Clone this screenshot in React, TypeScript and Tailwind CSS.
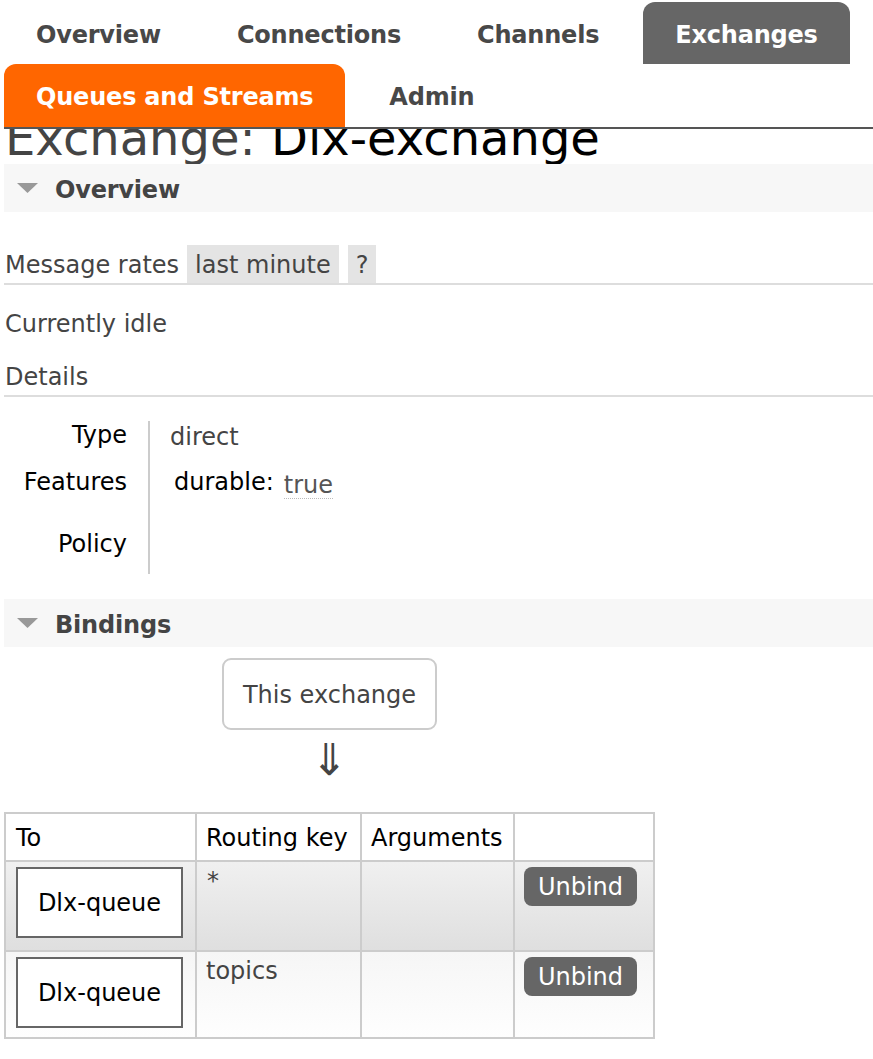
import React from "react";

const tabsTop = [
  { label: "Overview", active: false },
  { label: "Connections", active: false },
  { label: "Channels", active: false },
  { label: "Exchanges", active: true },
];

function Tab({ label, tone }: { label: string; tone: "none" | "gray" | "orange" }) {
  const cls =
    tone === "gray"
      ? "bg-[#666] text-white rounded-t-[12px]"
      : tone === "orange"
        ? "bg-[#f60] text-white rounded-t-[12px]"
        : "text-[#484848]";
  return (
    <div
      className={`flex items-center px-[32px] pt-[3px] font-bold tracking-[-0.2px] whitespace-nowrap ${cls}`}
    >
      {label}
    </div>
  );
}

function SectionHeader({ title }: { title: string }) {
  return (
    <div className="ml-[4px] flex h-[48px] items-center bg-[#f7f7f7]">
      <svg width="21" height="10" viewBox="0 0 21 10" className="ml-[13px] mr-[17px]">
        <polygon points="0,0 21,0 10.5,10" fill="#999" />
      </svg>
      <span className="pt-[3px] font-bold tracking-[-0.2px] text-[#444]">{title}</span>
    </div>
  );
}

function Unbind() {
  return (
    <div className="ml-[9px] mt-[5px] flex h-[39px] w-[113px] items-center justify-center rounded-[8px] bg-[#666] text-white">
      Unbind
    </div>
  );
}

function QueueBox() {
  return (
    <div className="ml-[10px] mt-[5px] flex h-[71px] w-[167px] items-center justify-center border-2 border-[#666] bg-white text-black">
      Dlx-queue
    </div>
  );
}

export default function App() {
  return (
    <div
      className="w-[873px] bg-white pb-[20px] text-[24px] text-[#444]"
      style={{ fontFamily: '"DejaVu Sans", Verdana, sans-serif' }}
    >
      {/* navigation */}
      <div className="ml-[4px] border-b-2 border-[#555] pt-[2px]">
        <div className="flex h-[62px] gap-[12px]">
          {tabsTop.map((t) => (
            <Tab key={t.label} label={t.label} tone={t.active ? "gray" : "none"} />
          ))}
        </div>
        <div className="flex h-[63px] gap-[12px]">
          <Tab label="Queues and Streams" tone="orange" />
          <Tab label="Admin" tone="none" />
        </div>
      </div>

      {/* page title, partly hidden under the header */}
      <div className="h-[35px] overflow-hidden">
        <h1 className="ml-[5px] mt-[-15px] whitespace-nowrap text-[48px] leading-[48px]">
          Exchange: <span className="text-black">Dlx-exchange</span>
        </h1>
      </div>

      <SectionHeader title="Overview" />

      <div className="ml-[4px] mt-[33px] flex h-[38px] items-center border-b-2 border-[#ddd] box-content">
        <span className="ml-[1px] mr-[8px] pt-[1px]">Message rates</span>
        <span className="flex h-[38px] items-center bg-[#e4e4e4] px-[8px] pt-[1px]">last minute</span>
        <span className="ml-[9px] flex h-[38px] items-center bg-[#e4e4e4] px-[8px] pt-[1px]">?</span>
      </div>

      <div className="ml-[5px] mt-[21px] h-[36px] leading-[36px]">Currently idle</div>
      <div className="ml-[4px] mt-[16px] h-[36px] border-b-2 border-[#ddd] pl-[1px] pt-[1px] leading-[36px] box-content">
        Details
      </div>

      {/* details table */}
      <div className="ml-[4px] mt-[24px] grid grid-cols-[146px_1fr]">
        <div className="flex flex-col items-end border-r-2 border-[#ccc] pr-[21px] text-black">
          <div className="h-[40px] pt-[1px] leading-[26px]">Type</div>
          <div className="h-[60px] pt-[8px] leading-[26px]">Features</div>
          <div className="h-[53px] pt-[10px] leading-[26px]">Policy</div>
        </div>
        <div className="flex flex-col">
          <div className="h-[40px] pl-[20px] pt-[3px] leading-[26px]">direct</div>
          <div className="flex h-[60px] items-start pl-[24px] pt-[8px] leading-[26px]">
            <span className="text-black">durable:</span>
            <span className="ml-[10px] mt-[3px] border-b border-dotted border-[#bbb] text-[#555]">true</span>
          </div>
          <div className="h-[53px]" />
        </div>
      </div>

      <div className="mt-[25px]">
        <SectionHeader title="Bindings" />
      </div>

      <div className="ml-[4px] flex w-[651px] flex-col items-center">
        <div className="mt-[11px] flex h-[72px] w-[215px] items-center justify-center rounded-[9px] border-2 border-[#ccc] pt-[2px]">
          This exchange
        </div>
        <div className="mt-[5px] h-[50px] text-[44px] leading-[50px]">⇓</div>
      </div>

      {/* bindings table */}
      <div className="ml-[4px] mt-[27px] grid w-[651px] grid-cols-[189px_163px_151px_138px] grid-rows-[46px_88px_85px] gap-[2px] bg-[#ccc] p-[2px]">
        <div className="flex items-center bg-white pl-[10px] pt-[2px] text-black">To</div>
        <div className="flex items-center bg-white pl-[9px] pt-[2px] text-black">Routing key</div>
        <div className="flex items-center bg-white pl-[9px] pt-[2px] text-black">Arguments</div>
        <div className="bg-white" />

        <div className="bg-gradient-to-b from-[#f0f0f0] to-[#dfdfdf]">
          <QueueBox />
        </div>
        <div className="bg-gradient-to-b from-[#f0f0f0] to-[#dfdfdf] pl-[10px] pt-[1px] leading-[36px]">*</div>
        <div className="bg-gradient-to-b from-[#f0f0f0] to-[#dfdfdf]" />
        <div className="bg-gradient-to-b from-[#f0f0f0] to-[#dfdfdf]">
          <Unbind />
        </div>

        <div className="bg-gradient-to-b from-[#f6f6f6] to-[#fefefe]">
          <QueueBox />
        </div>
        <div className="bg-gradient-to-b from-[#f6f6f6] to-[#fefefe] pl-[9px] pt-[1px] leading-[36px]">topics</div>
        <div className="bg-gradient-to-b from-[#f6f6f6] to-[#fefefe]" />
        <div className="bg-gradient-to-b from-[#f6f6f6] to-[#fefefe]">
          <Unbind />
        </div>
      </div>
    </div>
  );
}
